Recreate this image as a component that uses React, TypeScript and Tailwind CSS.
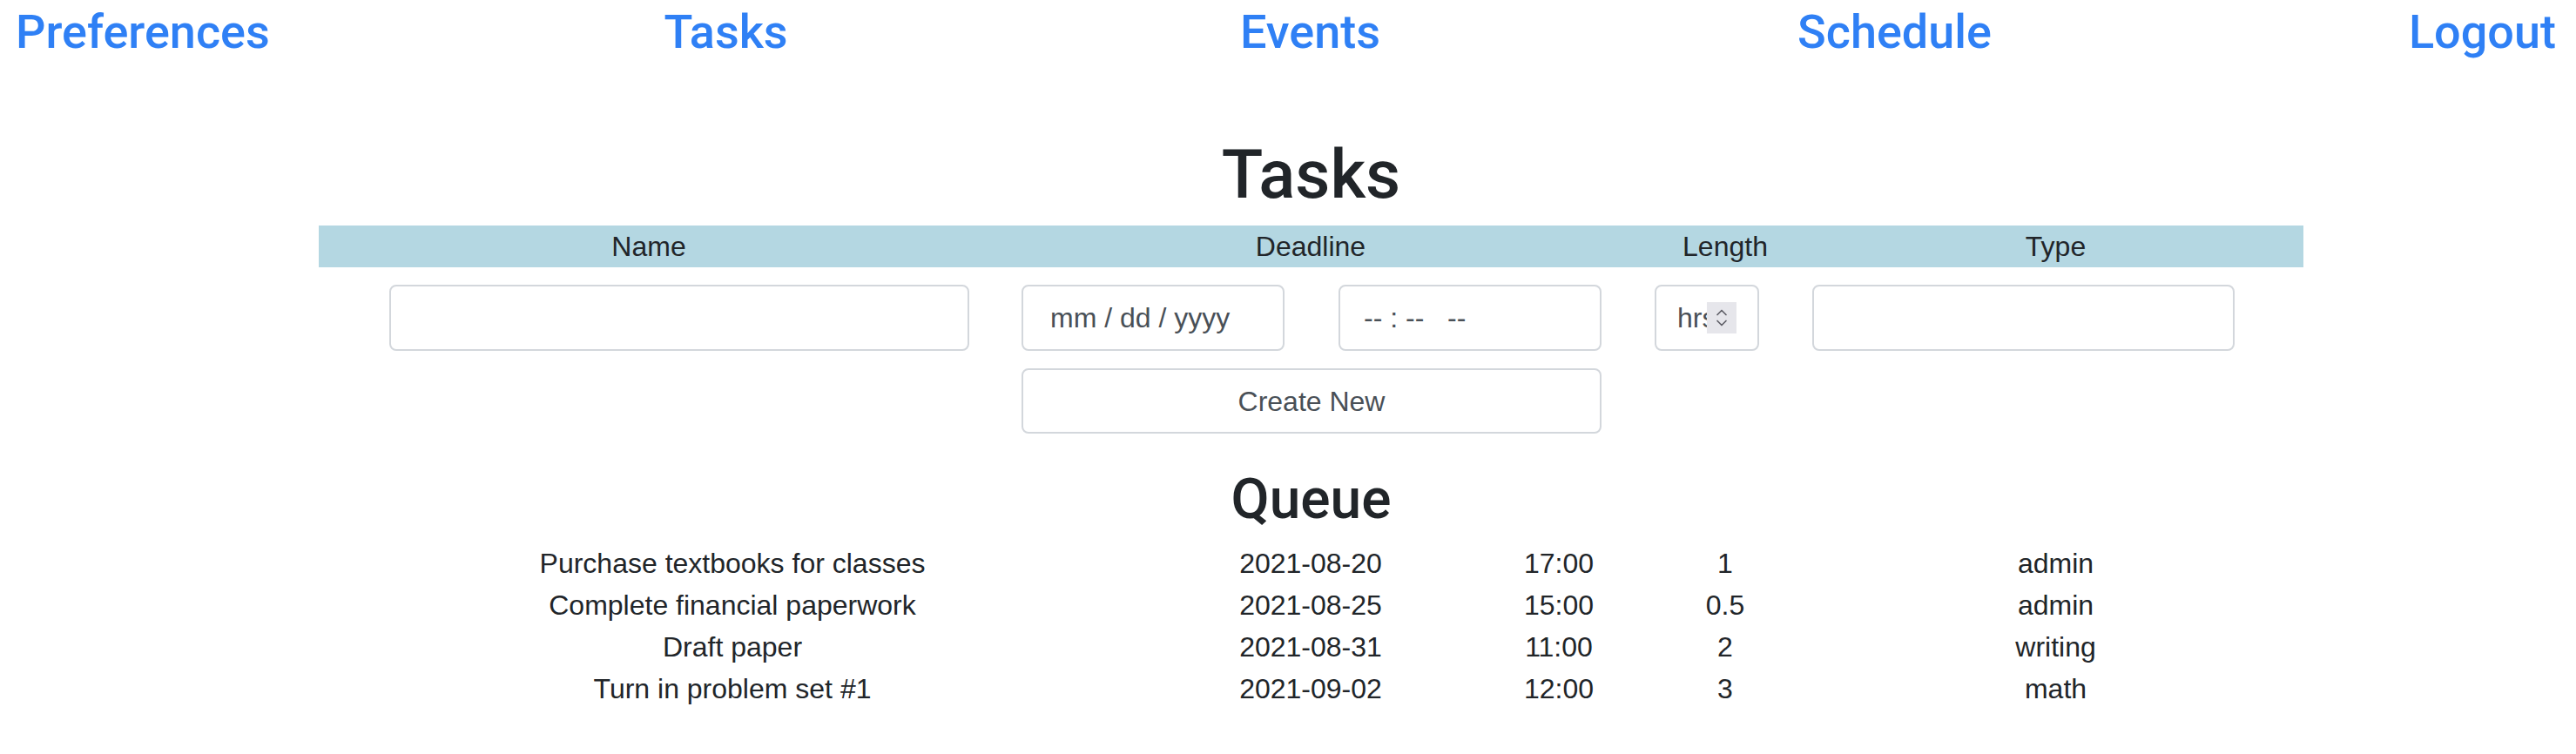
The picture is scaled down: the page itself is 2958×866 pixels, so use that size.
import { ChevronDown, ChevronUp } from 'lucide-react'

const NAV = ['Preferences', 'Tasks', 'Events', 'Schedule', 'Logout']

const QUEUE = [
  { name: 'Purchase textbooks for classes', date: '2021-08-20', time: '17:00', length: '1', type: 'admin' },
  { name: 'Complete financial paperwork', date: '2021-08-25', time: '15:00', length: '0.5', type: 'admin' },
  { name: 'Draft paper', date: '2021-08-31', time: '11:00', length: '2', type: 'writing' },
  { name: 'Turn in problem set #1', date: '2021-09-02', time: '12:00', length: '3', type: 'math' },
]

const field =
  'h-[76px] rounded-[8px] border-2 border-[#d3d7dc] bg-white text-[32px] text-[#495057] outline-none placeholder:text-[#495057]'

export default function App() {
  return (
    <div className="min-h-[866px] bg-white font-['Liberation_Sans',Arial,sans-serif] text-[#212529]">
      {/* top nav */}
      <nav className="grid grid-cols-[498px_671px_671px_671px_447px] pt-[3px] font-['Roboto',sans-serif] text-[54px] leading-[67px] font-medium text-[#2f80f5]">
        {NAV.map((label, i) => (
          <a
            key={label}
            href="#"
            className={
              i === 0 ? 'pl-[18px] text-left' : i === NAV.length - 1 ? 'pr-[23px] text-right' : 'text-center'
            }
          >
            {label}
          </a>
        ))}
      </nav>

      <main className="ml-[366px] w-[2279px]">
        <h1 className="mt-[85px] mb-[13px] text-center font-['Roboto',sans-serif] text-[78px] leading-[91px] font-medium">
          Tasks
        </h1>

        <div className="grid grid-cols-[758px_762px_190px_569px] bg-[#b4d7e2] text-center text-[32px] leading-[48px]">
          <div>Name</div>
          <div>Deadline</div>
          <div>Length</div>
          <div>Type</div>
        </div>

        <div className="mt-[20px] grid grid-cols-[758px_762px_190px_569px]">
          <div>
            <input className={`${field} ml-[81px] w-[666px] px-[24px]`} />
          </div>
          <div className="flex gap-[62px] pl-[49px]">
            <input className={`${field} w-[302px] pl-[31px]`} placeholder="mm / dd / yyyy" />
            <input className={`${field} w-[302px] pl-[27px] whitespace-pre`} placeholder="-- : --   --" />
          </div>
          <div>
            <div className={`${field} ml-[14px] flex w-[120px] items-center pl-[24px]`}>
              <span className="w-[36px] overflow-hidden whitespace-nowrap">hrs</span>
              <span className="-ml-[2px] flex h-[36px] w-[34px] flex-col items-center justify-center bg-[#e6e6eb] text-[#5f5f66]">
                <ChevronUp size={20} strokeWidth={2} className="-mb-[4px]" />
                <ChevronDown size={20} strokeWidth={2} className="-mt-[4px]" />
              </span>
            </div>
          </div>
          <div>
            <input className={`${field} ml-[5px] w-[485px] px-[24px]`} />
          </div>

          <div />
          <div className="pl-[49px] pt-[20px]">
            <button className="h-[75px] w-[666px] rounded-[8px] border-2 border-[#d3d7dc] bg-white text-[32px] text-[#495057]">
              Create New
            </button>
          </div>
        </div>

        <h2 className="mt-[37px] mb-[11px] text-center font-['Roboto',sans-serif] text-[64px] leading-[77px] font-medium">
          Queue
        </h2>

        <div className="text-[32px] leading-[48px]">
          {QUEUE.map((t) => (
            <div key={t.name} className="grid grid-cols-[950px_378px_192px_190px_569px] text-center">
              <div>{t.name}</div>
              <div>{t.date}</div>
              <div>{t.time}</div>
              <div>{t.length}</div>
              <div>{t.type}</div>
            </div>
          ))}
        </div>
      </main>
    </div>
  )
}
